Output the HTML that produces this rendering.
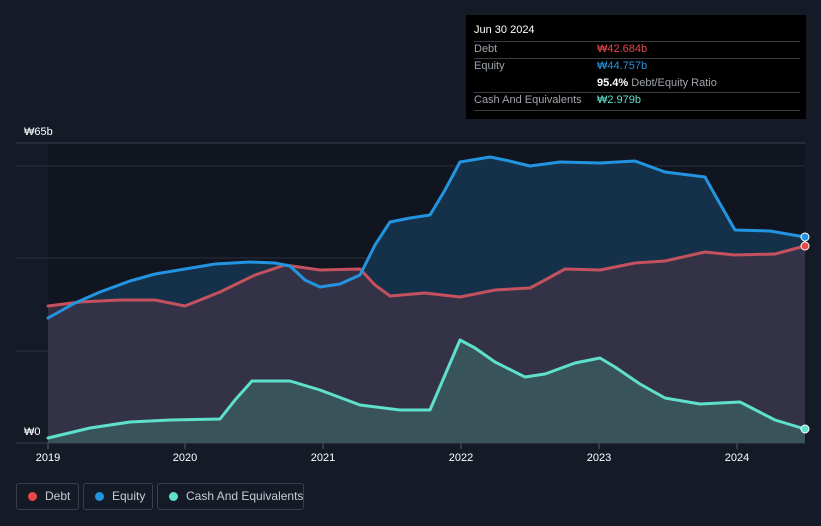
<!DOCTYPE html>
<html><head><meta charset="utf-8"><style>
html,body{margin:0;width:821px;height:526px;overflow:hidden}
body{background:#151b26;font-family:"Liberation Sans",sans-serif;position:relative}
.tt{position:absolute;left:466px;top:15px;width:340px;height:104px;background:#000;color:#fff;font-size:11px}
.tt .r{position:absolute;left:8px;width:326px;border-top:1px solid #3a3d44}
.lab{position:absolute;left:8px;color:#a0a4ab}
.val{position:absolute;left:131px;white-space:nowrap}
.leg{position:absolute;top:483px;height:27px;border:1px solid #3a3f4a;border-radius:3px;color:#c8ccd2;font-size:12px;line-height:25px;box-sizing:border-box;white-space:nowrap}
.leg i{position:absolute;left:11px;top:8px;width:9px;height:9px;border-radius:50%}
</style></head><body>
<svg width="821" height="526" style="position:absolute;left:0;top:0">
<rect x="48" y="143" width="757" height="300" fill="#10151f"/>
<line x1="16" y1="143" x2="805" y2="143" stroke="#3a3f4a"/>
<line x1="16" y1="166" x2="805" y2="166" stroke="#2a2f3a"/>
<line x1="16" y1="258" x2="805" y2="258" stroke="#2a2f3a"/>
<line x1="16" y1="351" x2="805" y2="351" stroke="#2a2f3a"/>
<line x1="16" y1="443" x2="805" y2="443" stroke="#3a3f4a"/>
<path d="M48,318 L75,303 100,292 130,281 155,274 185,269 215,264 250,262 275,263 290,266 305,280 320,287 340,284 360,275 375,245 390,222 410,218 430,215 445,190 460,162 490,157 505,160 530,166 560,162 600,163 635,161 665,172 705,177 715,195 735,230 770,231 805,237 L805,443 48,443Z" fill="#16344f" opacity="0.9"/>
<path d="M48,306 L80,302 120,300 155,300 185,306 220,292 255,275 285,265 320,270 360,269 375,285 390,296 425,293 460,297 495,290 530,288 545,280 565,269 600,270 635,263 665,261 705,252 735,255 775,254 805,246 L805,443 48,443Z" fill="#3a3246" opacity="0.85"/>
<path d="M48,438 L90,428 130,422 170,420 220,419 235,400 252,381 290,381 320,390 360,405 400,410 430,410 445,375 460,340 475,348 495,362 525,377 545,374 575,363 600,358 615,367 640,384 665,398 700,404 740,402 775,420 805,429 L805,443 48,443Z" fill="#3a5a5e" opacity="0.85"/>
<g fill="none" stroke-width="3" stroke-linejoin="round" stroke-linecap="round">
<path d="M48,306 L80,302 120,300 155,300 185,306 220,292 255,275 285,265 320,270 360,269 375,285 390,296 425,293 460,297 495,290 530,288 545,280 565,269 600,270 635,263 665,261 705,252 735,255 775,254 805,246" stroke="#c4515e"/>
<path d="M48,318 L75,303 100,292 130,281 155,274 185,269 215,264 250,262 275,263 290,266 305,280 320,287 340,284 360,275 375,245 390,222 410,218 430,215 445,190 460,162 490,157 505,160 530,166 560,162 600,163 635,161 665,172 705,177 715,195 735,230 770,231 805,237" stroke="#2394e0"/>
<path d="M48,438 L90,428 130,422 170,420 220,419 235,400 252,381 290,381 320,390 360,405 400,410 430,410 445,375 460,340 475,348 495,362 525,377 545,374 575,363 600,358 615,367 640,384 665,398 700,404 740,402 775,420 805,429" stroke="#5fe0cc"/>
</g>
<circle cx="805" cy="246" r="4" fill="#e84848" stroke="#fff" stroke-width="1"/>
<circle cx="805" cy="237" r="4" fill="#2394e0" stroke="#fff" stroke-width="1"/>
<circle cx="805" cy="429" r="4" fill="#5fe0cc" stroke="#fff" stroke-width="1"/>
<g fill="#fff" font-size="11" font-family="Liberation Sans">
<text x="24" y="135">₩65b</text><text x="24" y="435">₩0</text>
<g text-anchor="middle"><text x="48" y="461">2019</text><text x="185" y="461">2020</text><text x="323" y="461">2021</text><text x="461" y="461">2022</text><text x="599" y="461">2023</text><text x="737" y="461">2024</text></g>
</g>
<g stroke="#555a63"><line x1="48" y1="443" x2="48" y2="449"/><line x1="185" y1="443" x2="185" y2="449"/><line x1="323" y1="443" x2="323" y2="449"/><line x1="461" y1="443" x2="461" y2="449"/><line x1="599" y1="443" x2="599" y2="449"/><line x1="737" y1="443" x2="737" y2="449"/></g>
</svg>
<div class="tt">
<div style="position:absolute;left:8px;top:9px">Jun 30 2024</div>
<div class="r" style="top:26px"></div>
<div class="lab" style="top:28px">Debt</div><div class="val" style="top:28px;color:#e84848">₩42.684b</div>
<div class="r" style="top:43px"></div>
<div class="lab" style="top:45px">Equity</div><div class="val" style="top:45px;color:#2394e0">₩44.757b</div>
<div class="val" style="top:62px"><b>95.4%</b> <span style="color:#a0a4ab">Debt/Equity Ratio</span></div>
<div class="r" style="top:77px"></div>
<div class="lab" style="top:79px">Cash And Equivalents</div><div class="val" style="top:79px;color:#5fe0cc">₩2.979b</div>
<div class="r" style="top:95px"></div>
</div>
<div class="leg" style="left:16px;width:63px"><i style="background:#e84848"></i><span style="position:absolute;left:28px">Debt</span></div>
<div class="leg" style="left:83px;width:70px"><i style="background:#2394e0"></i><span style="position:absolute;left:28px">Equity</span></div>
<div class="leg" style="left:157px;width:147px"><i style="background:#5fe0cc"></i><span style="position:absolute;left:28px">Cash And Equivalents</span></div>
</body></html>
